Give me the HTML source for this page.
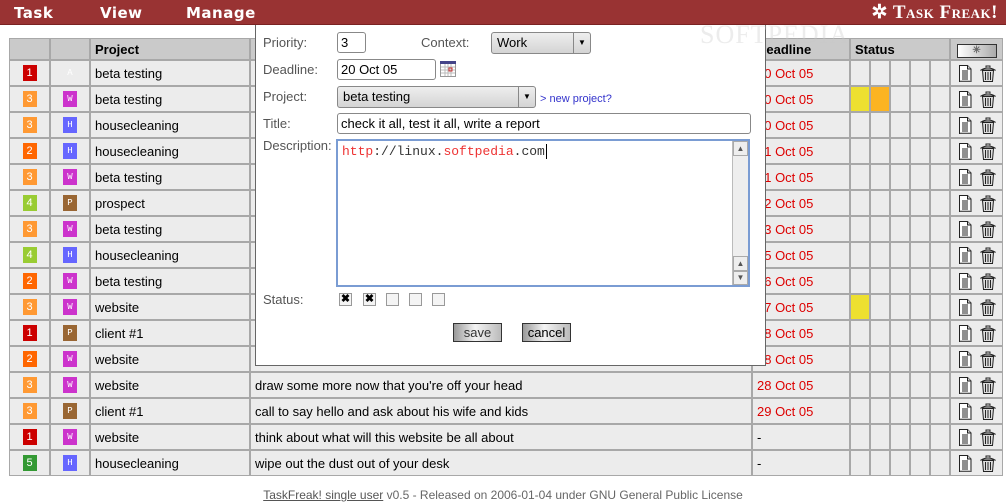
<!DOCTYPE html>
<html><head><meta charset="utf-8"><style>
*{box-sizing:border-box}
body{margin:0;width:1006px;height:503px;background:#fff;font-family:"Liberation Sans",sans-serif;font-size:13px;position:relative;overflow:hidden;color:#000}
#hdr{position:absolute;left:0;top:0;width:1006px;height:25px;background:#993333;border-bottom:1px solid #7a2222}
#hdr .m{position:absolute;top:4px;color:#fff;font-weight:bold;font-size:15px;letter-spacing:.5px;font-family:"DejaVu Sans","Liberation Sans",sans-serif}
#logo{position:absolute;right:8px;top:1px;color:#fff;font-family:"Liberation Serif",serif;font-weight:bold;font-size:19px;font-variant:small-caps;letter-spacing:.5px}
table{position:absolute;left:8px;top:37px;border-collapse:collapse;table-layout:fixed;width:994px}
td,th{border:2px solid #fff;outline:1px solid #a8a8a8;outline-offset:-1px;background:#ececec;height:26px;padding:0 4px;white-space:nowrap;overflow:hidden}
th{background:#cacaca;height:22px;text-align:left;font-weight:bold}
.c{text-align:center;padding:0}
.p{display:inline-block;width:14px;height:16px;color:#fff;font-size:11px;line-height:16px;text-align:center;vertical-align:middle}
.x{display:inline-block;width:14px;height:16px;color:#fff;font-size:9px;line-height:16px;text-align:center;font-family:"Liberation Mono",monospace;vertical-align:middle}
.r{color:#d00}
.st{padding:0}
.y{background:#ede030}.o{background:#fbb422}
#pop{position:absolute;left:255px;top:25px;width:511px;height:341px;background:#fff;border:1px solid #666;border-top:none;color:#555}
.l{position:absolute;left:7px;font-size:13px}
.inp{position:absolute;border:1px solid #888;border-radius:3px;background:#fff;color:#000;font-size:13px;padding:0 3px;line-height:19px}
.sel{position:absolute;border:1px solid #888;border-radius:3px;background:linear-gradient(#eee,#d4d4d4);color:#000;font-size:13px;padding:0 5px;line-height:20px}
.arr{position:absolute;right:0;top:0;width:17px;height:100%;border-left:1px solid #888;font-size:8px;text-align:center;line-height:20px}
.cb{position:absolute;top:268px;width:13px;height:13px;border:1px solid #999;background:#f4f4f4;font-size:11px;line-height:11px;text-align:center;color:#000;font-weight:bold}
.btn{position:absolute;top:298px;height:19px;border:1px solid #333;background:linear-gradient(90deg,#999,#f4f4f4 45%,#bbb);font-size:13px;line-height:17px;text-align:center;color:#333}
#foot{position:absolute;top:488px;left:0;width:1006px;text-align:center;font-size:12px;color:#666}
#foot u{color:#555}
.ic{display:inline-block;vertical-align:middle;margin:0 4px}
</style></head><body>
<svg width="0" height="0" style="position:absolute"><defs>
<symbol id="doc" viewBox="0 0 14 17"><path d="M1.5 .5h8l3.5 3.5v12.5h-11.5z" fill="#fff" stroke="#222"/><path d="M9.5 .5v3.5h3.5" fill="#ccc" stroke="#222"/><path d="M4 6h6M4 8h6M4 10h6M4 12h6M4 14h6" stroke="#222"/><path d="M2 16h10.5V4.5" fill="none" stroke="#888"/></symbol>
<symbol id="bin" viewBox="0 0 16 17"><path d="M6 2.5V1h4v1.5" fill="none" stroke="#222"/><path d="M1 5Q8 1 15 5z" fill="#ddd" stroke="#222"/><path d="M2.5 5.5h11l-1 11h-9z" fill="#ddd" stroke="#222"/><path d="M5.5 7v8M8 7v8M10.5 7v8" stroke="#222"/></symbol>
</defs></svg>
<div id="hdr"><span class="m" style="left:14px">Task</span><span class="m" style="left:100px">View</span><span class="m" style="left:186px">Manage</span><span id="logo">✲ Task Freak!</span></div>

<table>
<colgroup><col style="width:41px"><col style="width:40px"><col style="width:160px"><col style="width:502px"><col style="width:98px"><col style="width:20px"><col style="width:20px"><col style="width:20px"><col style="width:20px"><col style="width:20px"><col style="width:53px"></colgroup>
<tr><th></th><th></th><th>Project</th><th>Title</th><th>Deadline</th><th colspan="5">Status</th><th class="c"><span style="display:inline-block;width:40px;height:14px;border:1px solid #333;background:linear-gradient(90deg,#fff,#aaa);font-size:10px;line-height:12px;color:#666">✳</span></th></tr>
<tr><td class="c"><span class="p" style="background:#c00">1</span></td><td class="c"><span class="x">A</span></td><td>beta testing</td><td>Upload the new version</td><td class="r">20 Oct 05</td><td class="st"></td><td class="st"></td><td class="st"></td><td class="st"></td><td class="st"></td><td class="c"><svg class="ic" width="14" height="17"><use href="#doc"/></svg><svg class="ic" width="16" height="17"><use href="#bin"/></svg></td></tr>
<tr><td class="c"><span class="p" style="background:#f93">3</span></td><td class="c"><span class="x" style="background:#c3c">W</span></td><td>beta testing</td><td>check it all, test it all, write a report</td><td class="r">20 Oct 05</td><td class="st y"></td><td class="st o"></td><td class="st"></td><td class="st"></td><td class="st"></td><td class="c"><svg class="ic" width="14" height="17"><use href="#doc"/></svg><svg class="ic" width="16" height="17"><use href="#bin"/></svg></td></tr>
<tr><td class="c"><span class="p" style="background:#f93">3</span></td><td class="c"><span class="x" style="background:#66f">H</span></td><td>housecleaning</td><td>fold the laundry</td><td class="r">20 Oct 05</td><td class="st"></td><td class="st"></td><td class="st"></td><td class="st"></td><td class="st"></td><td class="c"><svg class="ic" width="14" height="17"><use href="#doc"/></svg><svg class="ic" width="16" height="17"><use href="#bin"/></svg></td></tr>
<tr><td class="c"><span class="p" style="background:#f60">2</span></td><td class="c"><span class="x" style="background:#66f">H</span></td><td>housecleaning</td><td>clean up the kitchen</td><td class="r">21 Oct 05</td><td class="st"></td><td class="st"></td><td class="st"></td><td class="st"></td><td class="st"></td><td class="c"><svg class="ic" width="14" height="17"><use href="#doc"/></svg><svg class="ic" width="16" height="17"><use href="#bin"/></svg></td></tr>
<tr><td class="c"><span class="p" style="background:#f93">3</span></td><td class="c"><span class="x" style="background:#c3c">W</span></td><td>beta testing</td><td>test the new features</td><td class="r">21 Oct 05</td><td class="st"></td><td class="st"></td><td class="st"></td><td class="st"></td><td class="st"></td><td class="c"><svg class="ic" width="14" height="17"><use href="#doc"/></svg><svg class="ic" width="16" height="17"><use href="#bin"/></svg></td></tr>
<tr><td class="c"><span class="p" style="background:#9c3">4</span></td><td class="c"><span class="x" style="background:#963">P</span></td><td>prospect</td><td>call the new prospect</td><td class="r">22 Oct 05</td><td class="st"></td><td class="st"></td><td class="st"></td><td class="st"></td><td class="st"></td><td class="c"><svg class="ic" width="14" height="17"><use href="#doc"/></svg><svg class="ic" width="16" height="17"><use href="#bin"/></svg></td></tr>
<tr><td class="c"><span class="p" style="background:#f93">3</span></td><td class="c"><span class="x" style="background:#c3c">W</span></td><td>beta testing</td><td>bug report</td><td class="r">23 Oct 05</td><td class="st"></td><td class="st"></td><td class="st"></td><td class="st"></td><td class="st"></td><td class="c"><svg class="ic" width="14" height="17"><use href="#doc"/></svg><svg class="ic" width="16" height="17"><use href="#bin"/></svg></td></tr>
<tr><td class="c"><span class="p" style="background:#9c3">4</span></td><td class="c"><span class="x" style="background:#66f">H</span></td><td>housecleaning</td><td>iron the shirts</td><td class="r">25 Oct 05</td><td class="st"></td><td class="st"></td><td class="st"></td><td class="st"></td><td class="st"></td><td class="c"><svg class="ic" width="14" height="17"><use href="#doc"/></svg><svg class="ic" width="16" height="17"><use href="#bin"/></svg></td></tr>
<tr><td class="c"><span class="p" style="background:#f60">2</span></td><td class="c"><span class="x" style="background:#c3c">W</span></td><td>beta testing</td><td>check the logs</td><td class="r">26 Oct 05</td><td class="st"></td><td class="st"></td><td class="st"></td><td class="st"></td><td class="st"></td><td class="c"><svg class="ic" width="14" height="17"><use href="#doc"/></svg><svg class="ic" width="16" height="17"><use href="#bin"/></svg></td></tr>
<tr><td class="c"><span class="p" style="background:#f93">3</span></td><td class="c"><span class="x" style="background:#c3c">W</span></td><td>website</td><td>change the layout</td><td class="r">27 Oct 05</td><td class="st y"></td><td class="st"></td><td class="st"></td><td class="st"></td><td class="st"></td><td class="c"><svg class="ic" width="14" height="17"><use href="#doc"/></svg><svg class="ic" width="16" height="17"><use href="#bin"/></svg></td></tr>
<tr><td class="c"><span class="p" style="background:#c00">1</span></td><td class="c"><span class="x" style="background:#963">P</span></td><td>client #1</td><td>kick off meeting</td><td class="r">28 Oct 05</td><td class="st"></td><td class="st"></td><td class="st"></td><td class="st"></td><td class="st"></td><td class="c"><svg class="ic" width="14" height="17"><use href="#doc"/></svg><svg class="ic" width="16" height="17"><use href="#bin"/></svg></td></tr>
<tr><td class="c"><span class="p" style="background:#f60">2</span></td><td class="c"><span class="x" style="background:#c3c">W</span></td><td>website</td><td>make the menu</td><td class="r">28 Oct 05</td><td class="st"></td><td class="st"></td><td class="st"></td><td class="st"></td><td class="st"></td><td class="c"><svg class="ic" width="14" height="17"><use href="#doc"/></svg><svg class="ic" width="16" height="17"><use href="#bin"/></svg></td></tr>
<tr><td class="c"><span class="p" style="background:#f93">3</span></td><td class="c"><span class="x" style="background:#c3c">W</span></td><td>website</td><td>draw some more now that you're off your head</td><td class="r">28 Oct 05</td><td class="st"></td><td class="st"></td><td class="st"></td><td class="st"></td><td class="st"></td><td class="c"><svg class="ic" width="14" height="17"><use href="#doc"/></svg><svg class="ic" width="16" height="17"><use href="#bin"/></svg></td></tr>
<tr><td class="c"><span class="p" style="background:#f93">3</span></td><td class="c"><span class="x" style="background:#963">P</span></td><td>client #1</td><td>call to say hello and ask about his wife and kids</td><td class="r">29 Oct 05</td><td class="st"></td><td class="st"></td><td class="st"></td><td class="st"></td><td class="st"></td><td class="c"><svg class="ic" width="14" height="17"><use href="#doc"/></svg><svg class="ic" width="16" height="17"><use href="#bin"/></svg></td></tr>
<tr><td class="c"><span class="p" style="background:#c00">1</span></td><td class="c"><span class="x" style="background:#c3c">W</span></td><td>website</td><td>think about what will this website be all about</td><td>-</td><td class="st"></td><td class="st"></td><td class="st"></td><td class="st"></td><td class="st"></td><td class="c"><svg class="ic" width="14" height="17"><use href="#doc"/></svg><svg class="ic" width="16" height="17"><use href="#bin"/></svg></td></tr>
<tr><td class="c"><span class="p" style="background:#393">5</span></td><td class="c"><span class="x" style="background:#66f">H</span></td><td>housecleaning</td><td>wipe out the dust out of your desk</td><td>-</td><td class="st"></td><td class="st"></td><td class="st"></td><td class="st"></td><td class="st"></td><td class="c"><svg class="ic" width="14" height="17"><use href="#doc"/></svg><svg class="ic" width="16" height="17"><use href="#bin"/></svg></td></tr>
</table>

<div id="pop">
<span class="l" style="top:10px">Priority:</span>
<div class="inp" style="left:81px;top:7px;width:29px;height:21px">3</div>
<span class="l" style="left:165px;top:10px">Context:</span>
<div class="sel" style="left:235px;top:7px;width:100px;height:22px">Work<span class="arr">▼</span></div>
<span class="l" style="top:37px">Deadline:</span>
<div class="inp" style="left:81px;top:34px;width:99px;height:21px">20 Oct 05</div>
<svg style="position:absolute;left:184px;top:36px" width="16" height="16"><rect x=".5" y=".5" width="15" height="15" fill="#fff" stroke="#999"/><rect x="0" y="0" width="16" height="3" fill="#448"/><path d="M1 6h14M1 9h14M1 12h14M5 3v12M8 3v12M11 3v12" stroke="#bbb"/><rect x="9" y="7" width="3" height="3" fill="none" stroke="#c33"/></svg>
<span class="l" style="top:64px">Project:</span>
<div class="sel" style="left:81px;top:61px;width:199px;height:22px">beta testing<span class="arr">▼</span></div>
<span style="position:absolute;left:284px;top:68px;font-size:11px;color:#33c">&gt; new project?</span>
<span class="l" style="top:91px">Title:</span>
<div class="inp" style="left:81px;top:88px;width:414px;height:21px">check it all, test it all, write a report</div>
<span class="l" style="top:113px">Description:</span>
<div style="position:absolute;left:80px;top:114px;width:414px;height:148px;border:2px solid #7a9cd3;background:#fff">
<div style="position:absolute;left:4px;top:3px;font-family:'Liberation Mono',monospace;font-size:13px;color:#333"><span style="color:#e33">http</span>://linux.<span style="color:#e33">softpedia</span>.com<span style="border-left:1px solid #000;margin-left:1px"></span></div>
<div style="position:absolute;right:0;top:0;width:16px;height:100%;background:#eee;border-left:1px solid #bbb">
<div style="height:15px;border:1px solid #aaa;font-size:8px;text-align:center;line-height:13px">▲</div>
<div style="position:absolute;top:115px;width:15px;height:15px;border:1px solid #aaa;font-size:8px;text-align:center;line-height:13px">▲</div>
<div style="position:absolute;top:130px;width:15px;height:14px;border:1px solid #aaa;font-size:8px;text-align:center;line-height:12px">▼</div>
</div></div>
<span class="l" style="top:267px">Status:</span>
<div class="cb" style="left:83px">✖</div><div class="cb" style="left:107px">✖</div><div class="cb" style="left:130px"></div><div class="cb" style="left:153px"></div><div class="cb" style="left:176px"></div>
<div class="btn" style="left:197px;width:49px">save</div>
<div class="btn" style="left:266px;width:49px;color:#000">cancel</div>
</div>

<div style="position:absolute;left:700px;top:20px;font-family:'Liberation Serif',serif;font-size:26px;color:rgba(200,200,200,.35);letter-spacing:1px">SOFTPEDIA</div>

<div id="foot"><u>TaskFreak! single user</u> v0.5 - Released on 2006-01-04 under GNU General Public License</div>
</body></html>
